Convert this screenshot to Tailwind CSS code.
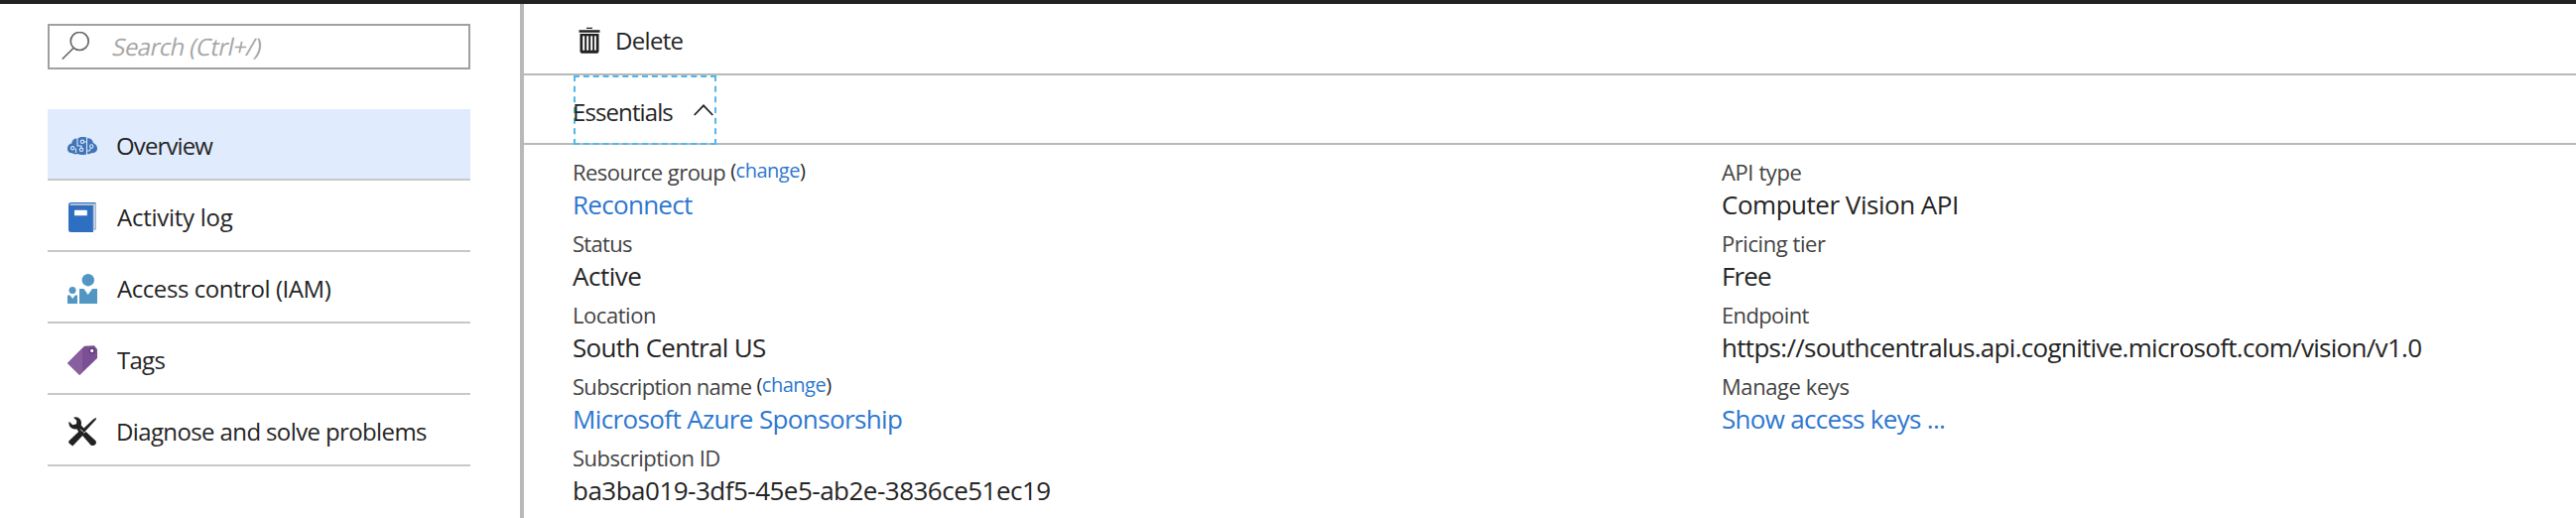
<!DOCTYPE html>
<html lang="en">
<head>
<meta charset="utf-8">
<title>Computer Vision API - Overview</title>
<script src="https://cdn.jsdelivr.net/npm/@tailwindcss/browser@4"></script>
</head>
<body class="bg-white font-['Open_Sans',sans-serif] text-[#252525]">
<div class="flex h-[522px] w-full flex-col overflow-hidden whitespace-nowrap">
  <div class="h-1 shrink-0 bg-[#222]"></div>
  <div class="flex min-h-0 flex-1">
    <nav class="w-[524px] shrink-0 pt-5 pl-12">
      <div class="flex h-[46px] w-[426px] items-center border-2 border-[#a0a0a0]">
        <svg class="ml-3 h-[30px] w-[30px]" viewBox="0 0 30 30" fill="none" stroke="#666" stroke-width="1.7"><circle cx="18.2" cy="9.5" r="9"/><path d="M12 16.5 .8 27.5"/></svg>
        <span class="ml-[22px] inline-block -skew-x-12 text-[24px] leading-8 tracking-[-0.6px] text-[#a6a6a6]">Search (Ctrl+/)</span>
      </div>
      <ul class="mt-10 w-[426px] text-[24px] leading-8">
        <li class="flex h-[72px] items-center border-b-2 border-[#c8c8c8] bg-[#e0ecfd] pt-1 pl-5">
          <svg class="h-[30px] w-[30px]" viewBox="0 0 30 30"><path fill="#3f74b8" d="M0 18.5C-.2 15 1.800 13 4.200 12.500 4.500 9 7 7.200 10 7.500 12 5.600 18 5.400 20.500 7.200 23.500 7.200 25.700 9.500 26 12 28.500 13 30.200 15.500 30 18 29.500 21.500 27 22.200 24 22.200 22 23.500 20.500 23.200 19.500 23.200 17 24.500 12.500 24.300 10.500 23 8 24 5.500 23 5 22.200 2 22.300.2 21 0 18.500Z"/><g fill="none" stroke="#dce9fa" stroke-width="1.100"><path d="M10 7v8h4v2.200M19.500 6.500V24M17 11h2.500v4M8.500 17.500V22M19.500 20h2.500l1.500-2.500"/><circle cx="5.200" cy="17.300" r="1.700"/><circle cx="15" cy="10.800" r="1.700"/><circle cx="14" cy="18.800" r="1.700"/><circle cx="24.200" cy="15.500" r="1.700"/></g></svg>
          <span class="ml-[19px] tracking-[-0.89px]">Overview</span>
        </li>
        <li class="flex h-[72px] items-center border-b-2 border-[#c8c8c8] pt-1 pl-5">
          <svg class="h-[30px] w-[30px]" viewBox="0 0 30 30"><path fill="#2f6fc2" d="M1 2.500Q1 0 3.500 0H28.500V27.500H26V30H3.500Q1 30 1 27.500Z"/><path fill="#fff" d="M3 1.200H28v25.500h-1.200V2.800H2.600Z" opacity=".75"/><path fill="#c3c0bd" d="M2.800 1.800H27.200V27.500L25.800 29V2.900H2.500Z"/><rect x="7" y="7.700" width="12.800" height="5.600" rx=".6" fill="#fff"/></svg>
          <span class="ml-[20px] tracking-[-0.27px]">Activity log</span>
        </li>
        <li class="flex h-[72px] items-center border-b-2 border-[#c8c8c8] pt-1 pl-5">
          <svg class="h-[30px] w-[30px]" viewBox="0 0 30 30" fill="#5297c3"><circle cx="20.800" cy="6.200" r="6.200"/><path d="M12 15h4.500l4.200 6 4.300-6H30v15H12ZM0 21.500h2.600L5.200 25l2.600-3.500H10V30H0Z"/><circle cx="5" cy="16.400" r="3.500"/></svg>
          <span class="ml-[20px] tracking-[-0.44px]">Access control (IAM)</span>
        </li>
        <li class="flex h-[72px] items-center border-b-2 border-[#c8c8c8] pt-1 pl-5">
          <svg class="h-[30px] w-[30px]" viewBox="0 0 30 30"><path fill="#7a4f93" d="M17 .7 27 .2 30 4v9L12.200 30 0 18Z"/><path fill="#885f9f" d="M0 18 15 3v24L12.200 30Z"/><circle cx="24.700" cy="5.500" r="2.300" fill="#fff" stroke="#5b3574" stroke-width="1.300"/></svg>
          <span class="ml-[20px] tracking-[-0.73px]">Tags</span>
        </li>
        <li class="flex h-[72px] items-center border-b-2 border-[#c8c8c8] pt-1 pl-5">
          <svg class="h-[30px] w-[30px]" viewBox="0 0 30 30" fill="#222"><path d="M29.200.8 28.600 3 18 14.600 28.500 24.300Q29.600 26.500 27.800 28.300 26 29.500 23.700 28.700L15.200 19 5.200 29.600 1.200 26.200 1.300 24.500 11.200 15 9.300 12.200Q5 13.200 2.500 10 .800 7 1.700 4.800L5.200 8.300 9 7.200 9.300 3.800 6 .800Q10-.600 12.800 2.500 14.600 5 13.700 8.600L16.500 11.500 26 2.500Z"/><path d="M13 12.500 16 15.500M16.500 16.500 19 14" stroke="#fff" stroke-width=".9" fill="none"/></svg>
          <span class="ml-[19px] tracking-[-0.62px]">Diagnose and solve problems</span>
        </li>
      </ul>
    </nav>
    <div class="w-1 shrink-0 bg-[#b9b9b9]"></div>
    <main class="min-w-0 flex-1">
      <div class="flex h-[72px] items-center border-b-2 border-[#b9b9b9] pt-[3px] pl-[55px]">
        <svg class="h-[28px] w-[22px]" viewBox="0 0 22 28"><path fill="#222" fill-rule="evenodd" d="M8 .8h6v1.200H8ZM.5 3.200h21v2.600H.5ZM1.500 7h19v17.500q0 2.200-2 2.200h-15q-2 0-2-2.200ZM4.200 9.200v14.600h2V9.200ZM8.200 9.200v14.600h2V9.200ZM12.200 9.200v14.600h2V9.200ZM16 9.200v14.600h1.800V9.200Z"/></svg>
        <span class="ml-[15px] text-[24px] leading-8 tracking-[-0.68px]">Delete</span>
      </div>
      <div class="h-[70px] border-b-2 border-[#b9b9b9] pl-[50px]">
        <button class="flex h-[70px] w-[144px] items-center border-2 border-dashed border-[#50b8ea] pt-[3px] text-left">
          <span class="-ml-[3px] text-[24px] leading-8 tracking-[-0.9px]">Essentials</span>
          <svg class="mr-px mb-1 ml-auto h-3 w-5 shrink-0" viewBox="0 0 20 12" fill="none" stroke="#222" stroke-width="1.800"><path d="M.7 11 10 1.300 19.300 11"/></svg>
        </button>
      </div>
      <div class="flex pt-3 pl-[49px] text-[26px] leading-9">
        <dl class="w-[1158px]">
          <dt class="flex h-[30px] text-[22px] leading-[30px] tracking-[-0.55px] text-[#444]">Resource group<span class="ml-[5px] text-[20px] leading-7 tracking-[-0.5px] text-[#252525]">(<a class="text-[#2e77d0]">change</a>)</span></dt>
          <dd class="mb-1.5 tracking-[-0.71px] text-[#2e77d0]">Reconnect</dd>
          <dt class="h-[30px] text-[22px] leading-[30px] tracking-[-0.7px] text-[#444]">Status</dt>
          <dd class="mb-1.5 tracking-[-0.5px]">Active</dd>
          <dt class="h-[30px] text-[22px] leading-[30px] tracking-[-0.44px] text-[#444]">Location</dt>
          <dd class="mb-1.5 tracking-[-0.69px]">South Central US</dd>
          <dt class="flex h-[30px] text-[22px] leading-[30px] tracking-[-0.7px] text-[#444]">Subscription name<span class="ml-[5px] text-[20px] leading-7 tracking-[-0.5px] text-[#252525]">(<a class="text-[#2e77d0]">change</a>)</span></dt>
          <dd class="mb-1.5 tracking-[-0.63px] text-[#2e77d0]">Microsoft Azure Sponsorship</dd>
          <dt class="h-[30px] text-[22px] leading-[30px] tracking-[-0.48px] text-[#444]">Subscription ID</dt>
          <dd class="tracking-[-0.51px]">ba3ba019-3df5-45e5-ab2e-3836ce51ec19</dd>
        </dl>
        <dl>
          <dt class="h-[30px] text-[22px] leading-[30px] tracking-[-0.4px] text-[#444]">API type</dt>
          <dd class="mb-1.5 tracking-[-0.48px]">Computer Vision API</dd>
          <dt class="h-[30px] text-[22px] leading-[30px] tracking-[-0.43px] text-[#444]">Pricing tier</dt>
          <dd class="mb-1.5 tracking-[-0.88px]">Free</dd>
          <dt class="h-[30px] text-[22px] leading-[30px] tracking-[-0.63px] text-[#444]">Endpoint</dt>
          <dd class="mb-1.5 tracking-[-0.7px]">https://southcentralus.api.cognitive.microsoft.com/vision/v1.0</dd>
          <dt class="h-[30px] text-[22px] leading-[30px] tracking-[-0.42px] text-[#444]">Manage keys</dt>
          <dd class="tracking-[-0.7px] text-[#2e77d0]">Show access keys ...</dd>
        </dl>
      </div>
    </main>
  </div>
</div>
</body>
</html>
